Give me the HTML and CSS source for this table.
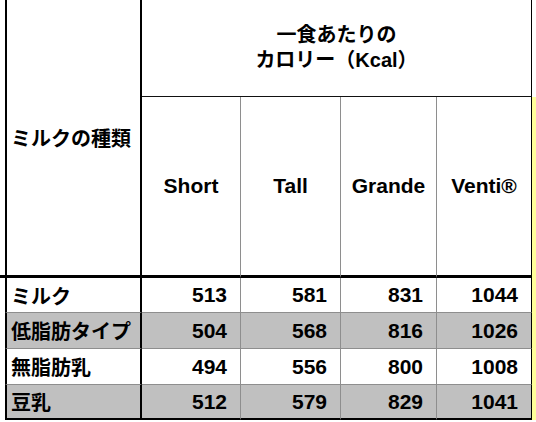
FILE: index.html
```html
<!DOCTYPE html>
<html lang="ja">
<head>
<meta charset="utf-8">
<title>ミルクの種類 カロリー</title>
<link rel="stylesheet" href="styles.css">
</head>
<body>
<div class="sheet">
  <div class="gutter gutter-head"></div>
  <div class="kind">ミルクの種類</div>
  <div class="cal">一食あたりの<br>カロリー（Kcal）</div>
  <div class="edge"></div>
  <div class="size">Short</div>
  <div class="size">Tall</div>
  <div class="size">Grande</div>
  <div class="size last">Venti®</div>
  <div class="edge yellow"></div>

  <div class="row">
    <div class="gutter"></div>
    <div class="name">ミルク</div>
    <div class="num">513</div>
    <div class="num">581</div>
    <div class="num">831</div>
    <div class="num last">1044</div>
    <div class="edge yellow"></div>
  </div>
  <div class="row alt">
    <div class="gutter"></div>
    <div class="name">低脂肪タイプ</div>
    <div class="num">504</div>
    <div class="num">568</div>
    <div class="num">816</div>
    <div class="num last">1026</div>
    <div class="edge yellow"></div>
  </div>
  <div class="row">
    <div class="gutter"></div>
    <div class="name">無脂肪乳</div>
    <div class="num">494</div>
    <div class="num">556</div>
    <div class="num">800</div>
    <div class="num last">1008</div>
    <div class="edge yellow"></div>
  </div>
  <div class="row alt final">
    <div class="gutter"></div>
    <div class="name">豆乳</div>
    <div class="num">512</div>
    <div class="num">579</div>
    <div class="num">829</div>
    <div class="num last">1041</div>
    <div class="edge yellow"></div>
  </div>
</div>
</body>
</html>
```

FILE: styles.css
```css
html, body {
  margin: 0;
  padding: 0;
  background: #ffffff;
}

.sheet {
  display: grid;
  grid-template-columns: 5px 137px 99px 100px 96px 95px 4px;
  grid-template-rows: 97px 181px 35px 36px 36px 35px;
  font-family: "Liberation Sans", "Noto Sans CJK JP", sans-serif;
  font-weight: bold;
  color: #000000;
}

.sheet div {
  box-sizing: border-box;
}

.row {
  display: contents;
}

.gutter-head {
  grid-row: span 2;
  border-bottom: 3px solid #000000;
}

.kind {
  grid-row: span 2;
  border-left: 2px solid #000000;
  border-right: 2px solid #000000;
  border-bottom: 3px solid #000000;
  display: flex;
  align-items: center;
  padding-left: 4px;
  font-size: 20px;
}

.cal {
  grid-column: span 4;
  border-right: 1px solid #000000;
  border-bottom: 1px solid #111111;
  display: flex;
  align-items: center;
  justify-content: center;
  text-align: center;
  font-size: 20px;
  line-height: 25px;
}

.size {
  border-right: 1px solid #8e8e8e;
  border-bottom: 3px solid #000000;
  display: flex;
  align-items: center;
  justify-content: center;
  font-size: 21px;
}

.name {
  border-left: 2px solid #000000;
  border-right: 2px solid #000000;
  border-bottom: 1px solid #8e8e8e;
  display: flex;
  align-items: center;
  padding-left: 4px;
  font-size: 20px;
  white-space: nowrap;
}

.num {
  border-right: 1px solid #8e8e8e;
  border-bottom: 1px solid #8e8e8e;
  display: flex;
  align-items: center;
  justify-content: flex-end;
  padding-right: 13px;
  font-size: 21px;
}

.size.last,
.num.last {
  border-right-color: #000000;
}

.alt .name,
.alt .num {
  background: #c0c0c0;
}

.final .name,
.final .num {
  border-bottom: 2px solid #000000;
}

.yellow {
  background: #ffff99;
}
```
